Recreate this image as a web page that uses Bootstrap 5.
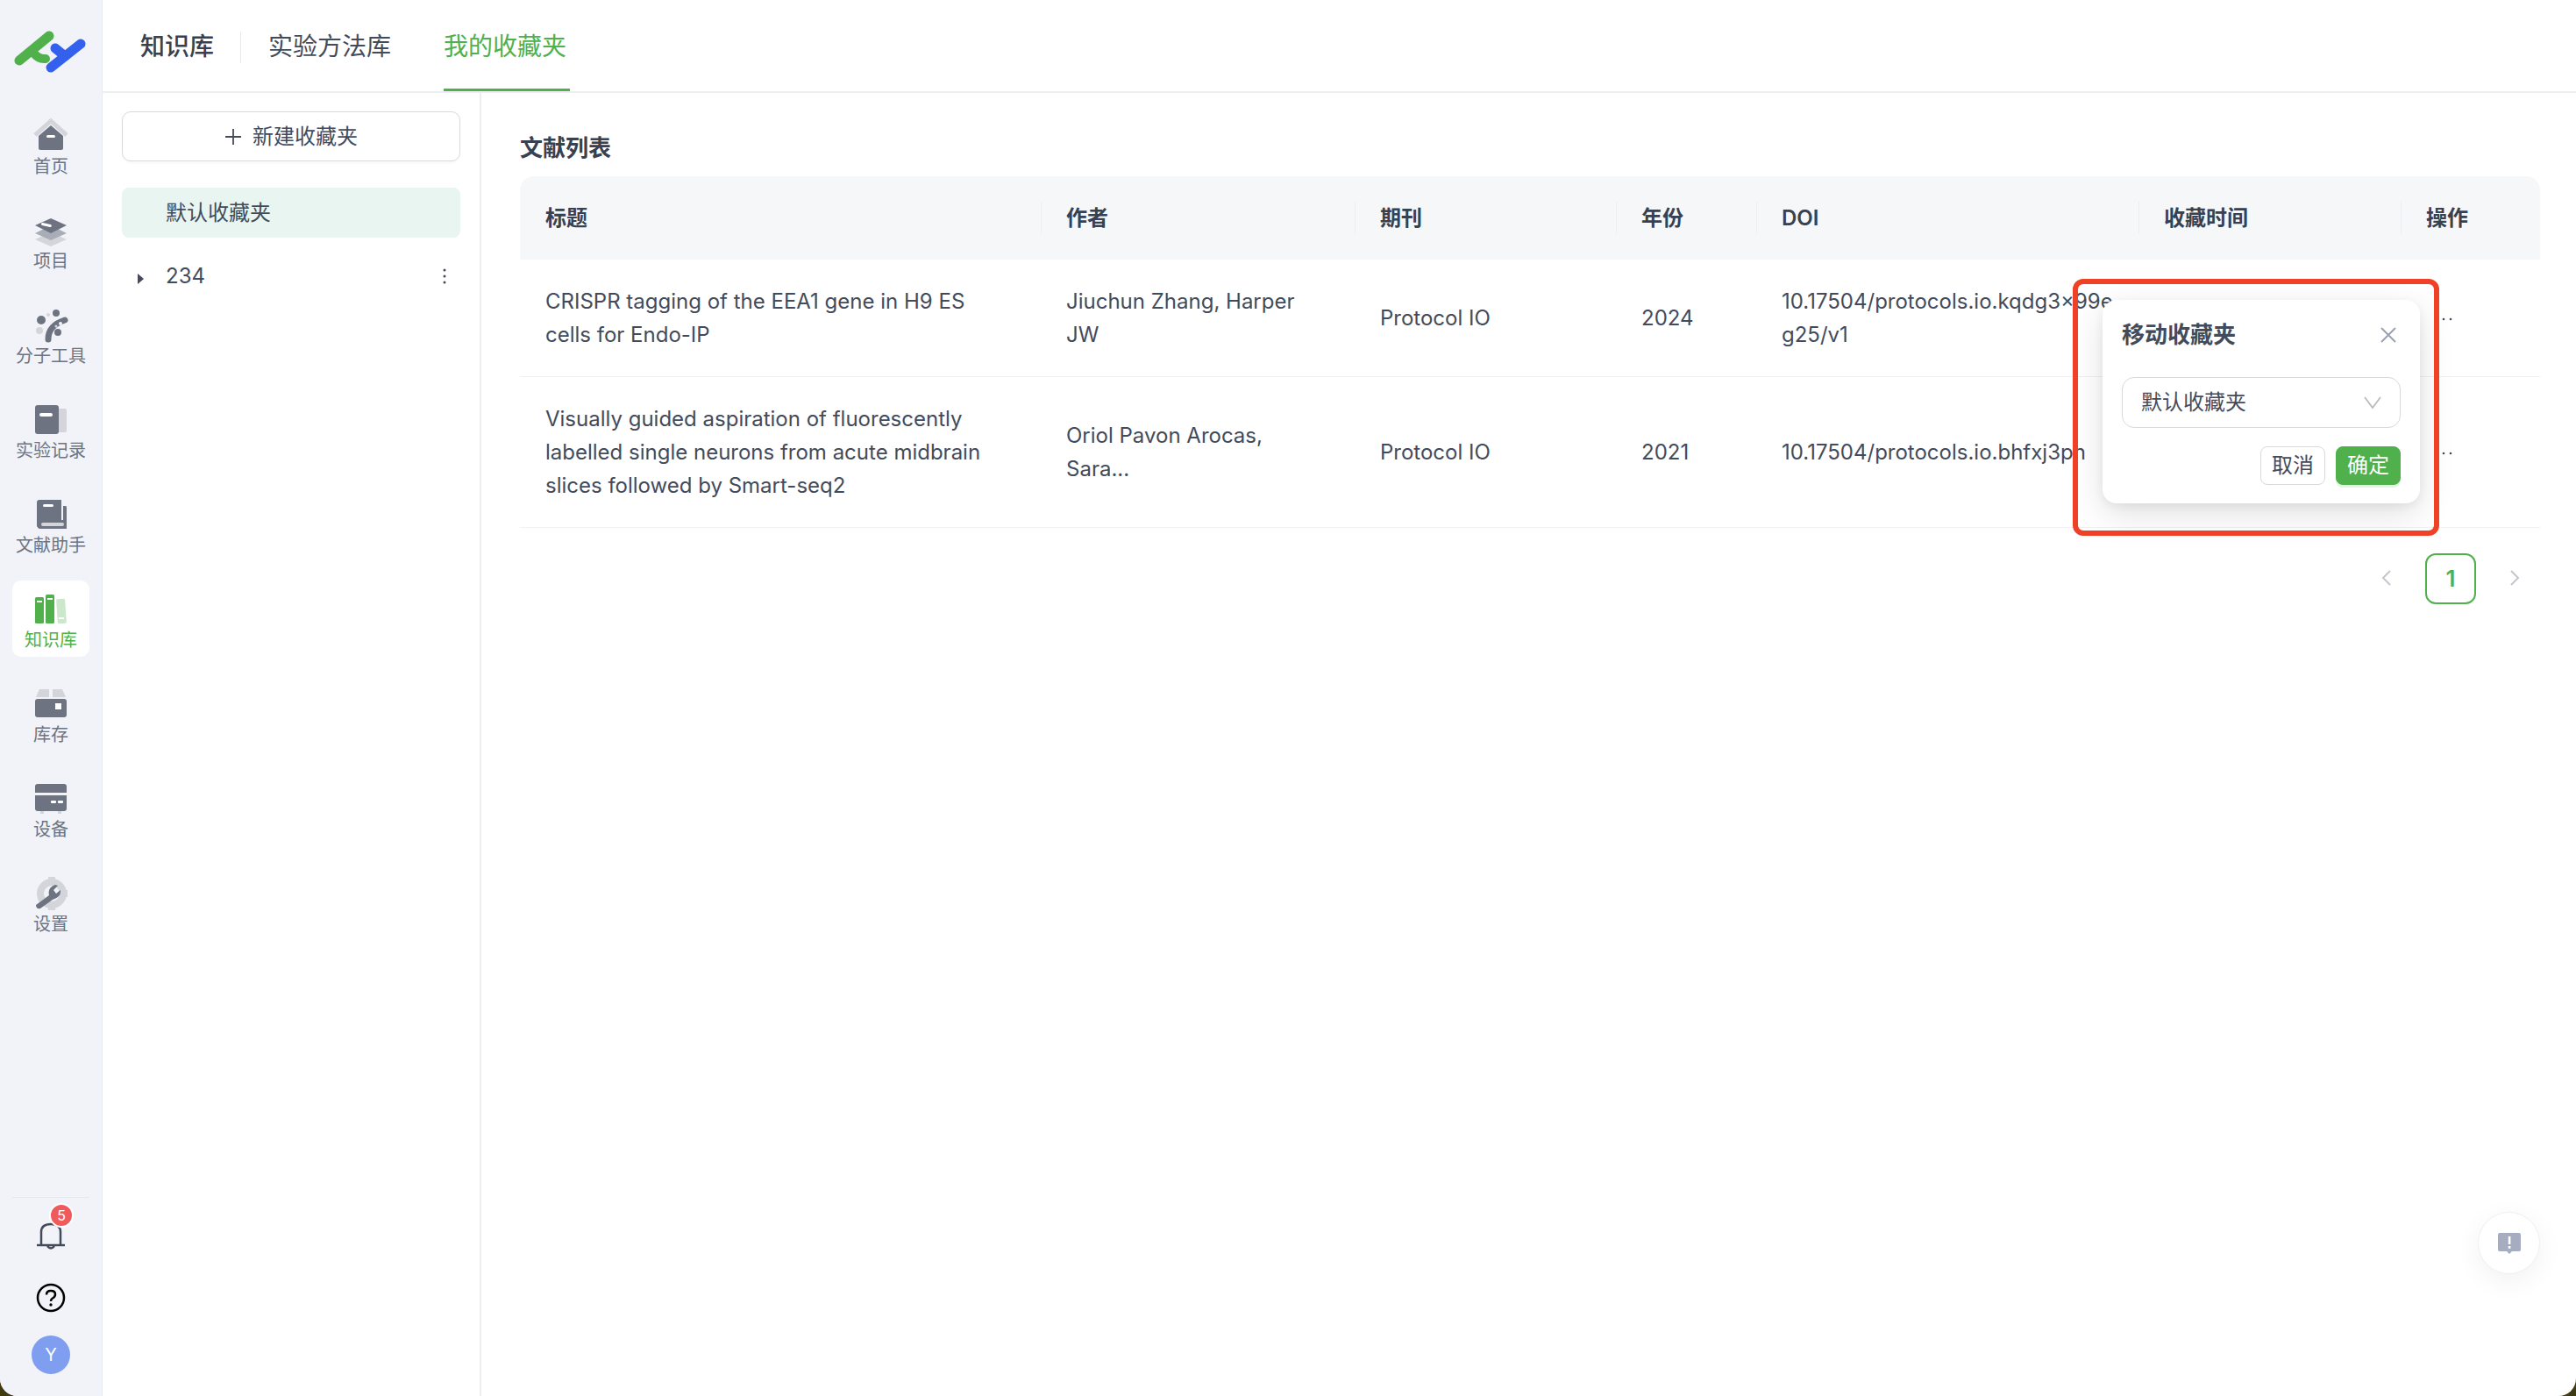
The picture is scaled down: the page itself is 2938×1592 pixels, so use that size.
<!DOCTYPE html>
<html lang="zh-CN">
<head>
    <meta charset="UTF-8">
    <meta name="viewport" content="width=device-width, initial-scale=1.0">
    <title>我的收藏夹</title>
    <link href="https://cdn.jsdelivr.net/npm/bootstrap@5.3.0/dist/css/bootstrap.min.css" rel="stylesheet">
    <style>
        html, body { height: 100%; }
        body {
            background: #3f3a12;
            font-family: Inter, "Noto Sans CJK SC", sans-serif;
            font-size: 24px;
            color: #434b5b;
            overflow: hidden;
        }
        .app-frame {
            height: 1592px;
            background: #fff;
            border-radius: 0 0 20px 20px;
            overflow: hidden;
        }
        .side-rail {
            width: 117px;
            background: #f1f3f8;
            border-right: 1px solid #e9ebf0;
        }
        .logo-box { height: 122px; padding-top: 30px; }
        .rail-nav { gap: 21px; }
        .rail-item {
            width: 88px;
            height: 87px;
            margin: 0 auto;
            border-radius: 10px;
            padding-top: 13px;
            color: #6d7380;
            font-size: 20px;
            line-height: 28px;
            text-decoration: none;
        }
        .rail-item svg { width: 40px; height: 40px; display: block; margin-bottom: 1px; }
        .rail-item.on { background: #fff; color: #50b04c; }
        .rail-line { height: 1px; width: 88px; background: #e6e8ec; margin: 0 auto 22px; }
        .bell-box { width: 40px; height: 40px; margin: 0 auto 33px; }
        .bell-num {
            position: absolute;
            top: -16px;
            right: -6px;
            width: 28px;
            height: 28px;
            border-radius: 50%;
            background: #ef5b5b;
            border: 2px solid #fff;
            color: #fff;
            font-size: 16px;
            line-height: 24px;
            text-align: center;
        }
        .help-box { width: 34px; height: 34px; margin: 0 auto 28px; }
        .user-dot {
            width: 44px;
            height: 44px;
            margin: 0 auto 25px;
            border-radius: 50%;
            background: #7f9ef0;
            color: #fff;
            font-size: 20px;
            line-height: 44px;
            text-align: center;
        }
        .top-tabs { height: 106px; border-bottom: 2px solid #eceef1; padding-left: 43px; }
        .top-tab {
            font-size: 28px;
            line-height: 40px;
            color: #434b5b;
            text-decoration: none;
            padding: 33px 0 31px;
            white-space: nowrap;
        }
        .top-tab.first { font-weight: 500; color: #374151; padding-right: 31px; position: relative; }
        .top-tab.first::after {
            content: "";
            position: absolute;
            right: 0;
            top: 36px;
            height: 36px;
            width: 1px;
            background: #e8eaee;
        }
        .top-tab.second { margin-left: 31px; margin-right: 60px; }
        .top-tab.active-tab {
            color: #50b04c;
            border-bottom: 3px solid #50b04c;
            width: 144px;
            padding-bottom: 30px;
        }
        .folder-panel {
            width: 432px;
            border-right: 2px solid #eceef1;
            padding: 21px 22px 0;
        }
        .new-folder {
            width: 100%;
            height: 57px;
            font-size: 24px;
            line-height: 32px;
            color: #434b5b;
            background: #fff;
            border: 1px solid #d9d9d9;
            border-radius: 10px;
            box-shadow: 0 3px 0 rgba(0, 0, 0, .02);
            margin-bottom: 30px;
        }
        .new-folder:hover { color: #434b5b; background: #fff; border-color: #d9d9d9; }
        .folder-row {
            height: 57px;
            line-height: 57px;
            padding-left: 50px;
            border-radius: 8px;
            position: relative;
        }
        .folder-row.on { background: #e9f5f1; margin-bottom: 15px; }
        .folder-caret {
            position: absolute;
            left: 18px;
            top: 26px;
            width: 0;
            height: 0;
            border-left: 7px solid #434b5b;
            border-top: 6px solid transparent;
            border-bottom: 6px solid transparent;
        }
        .folder-more {
            position: absolute;
            right: 16px;
            top: 20px;
            width: 4px;
            height: 18px;
        }
        .list-area { padding: 45px 41px 0 44px; min-width: 0; }
        .list-title {
            font-size: 26px;
            line-height: 36px;
            font-weight: 600;
            color: #374151;
            margin-bottom: 14px;
        }
        .paper-table { table-layout: fixed; width: 2304px; margin-bottom: 0; color: #434b5b; }
        .paper-table > :not(caption) > * > * { padding: 0 29px; border-color: #eef0f2; color: #434b5b; }
        .paper-table thead th {
            height: 95px;
            background: #f6f7f9;
            border-bottom: 0;
            font-weight: 600;
            font-size: 24px;
            color: #374151;
            position: relative;
            vertical-align: middle;
        }
        .paper-table thead th:first-child { border-top-left-radius: 16px; }
        .paper-table thead th:last-child { border-top-right-radius: 16px; }
        .paper-table thead th + th::before {
            content: "";
            position: absolute;
            left: 0;
            top: 29px;
            height: 37px;
            width: 1px;
            background: #eceef1;
        }
        .paper-table tbody td {
            padding-top: 29px;
            padding-bottom: 28px;
            line-height: 38px;
            vertical-align: middle;
        }
        .doi-cell { word-break: break-all; }
        .w-title { width: 594px; }
        .w-author { width: 358px; }
        .w-journal { width: 298px; }
        .w-year { width: 160px; }
        .w-doi { width: 436px; }
        .w-time { width: 299px; }
        .w-act { width: 159px; }
        .page-bar { gap: 15px; margin-top: 29px; }
        .page-cell {
            width: 58px;
            height: 58px;
            line-height: 54px;
            text-align: center;
            border-radius: 12px;
        }
        .page-cell.on { border: 2px solid #50b04c; color: #50b04c; font-weight: 600; font-size: 26px; }
        .page-cell svg { width: 14px; height: 20px; }
        .move-pop {
            position: absolute;
            left: 2398px;
            top: 342px;
            width: 362px;
            height: 232px;
            padding: 22px 22px 0;
            background: #fff;
            border-radius: 16px;
            box-shadow: 0 12px 40px rgba(0, 0, 0, .12), 0 4px 12px rgba(0, 0, 0, .06);
        }
        .pop-head { height: 36px; margin-bottom: 30px; font-size: 26px; line-height: 36px; font-weight: 600; color: #434b5b; }
        .pop-select {
            height: 58px;
            padding: 0 21px;
            border: 1px solid #d9d9d9;
            border-radius: 14px;
            line-height: 56px;
            margin-bottom: 21px;
        }
        .pop-btn {
            height: 44px;
            width: 74px;
            padding: 0;
            font-size: 24px;
            line-height: 42px;
            border-radius: 8px;
        }
        .pop-cancel { background: #fff; border: 1px solid #d9d9d9; color: #434b5b; }
        .pop-ok { background: #50b04c; border: 1px solid #50b04c; color: #fff; box-shadow: 0 3px 0 rgba(80, 176, 76, .15); }
        .red-mark {
            position: absolute;
            left: 2364px;
            top: 318px;
            width: 418px;
            height: 293px;
            border: 6px solid #ee4126;
            border-radius: 12px;
            pointer-events: none;
        }
        .help-float {
            position: absolute;
            left: 2826px;
            top: 1382px;
            width: 71px;
            height: 71px;
            border-radius: 50%;
            background: #fff;
            border: 1px solid #eef0f5;
            box-shadow: 0 8px 30px rgba(0, 0, 0, .06);
        }
    </style>
</head>
<body>
    <div class="app-frame d-flex position-relative">
        <aside class="side-rail d-flex flex-column flex-shrink-0">
            <div class="logo-box">
                <svg width="110" height="60" viewBox="0 0 110 60">
                    <path d="M22 39 L56 11" stroke="#50b04c" stroke-width="11" stroke-linecap="round" fill="none"/>
                    <path d="M38 30 Q44 38 52 37" stroke="#50b04c" stroke-width="10" stroke-linecap="round" fill="none"/>
                    <path d="M58 47 L92 20" stroke="#3460ee" stroke-width="11" stroke-linecap="round" fill="none"/>
                    <path d="M63 25 L74 34" stroke="#3460ee" stroke-width="11" stroke-linecap="round" fill="none"/>
                </svg>
            </div>
            <nav class="rail-nav d-flex flex-column">
                <a class="rail-item d-flex flex-column align-items-center" href="#">
                    <svg viewBox="0 0 40 40"><path d="M2 19 L20 3 L38 19" fill="none" stroke="#d3d5db" stroke-width="5"/><path d="M6 20 L20 8 L34 20 V34 Q34 36 32 36 H8 Q6 36 6 34Z" fill="#6d7380"/><rect x="15" y="19" width="10" height="3" rx="1.5" fill="#fff"/></svg>
                    <span>首页</span>
                </a>
                <a class="rail-item d-flex flex-column align-items-center" href="#">
                    <svg viewBox="0 0 40 40"><path d="M20 22 L38 30 L20 38 L2 30Z" fill="#d3d5db"/><path d="M20 14 L38 23 L20 31 L2 23Z" fill="#a9adb7"/><path d="M20 6 L38 14 L20 23 L2 14Z" fill="#6d7380"/><rect x="9" y="12" width="12" height="3" rx="1.5" fill="#fff" transform="rotate(12 15 13)"/></svg>
                    <span>项目</span>
                </a>
                <a class="rail-item d-flex flex-column align-items-center" href="#">
                    <svg viewBox="0 0 40 40"><path d="M17 36 Q17 20 36 14" fill="none" stroke="#6d7380" stroke-width="7" stroke-linecap="round"/><circle cx="26" cy="6" r="4" fill="#6d7380"/><circle cx="9" cy="14" r="5" fill="#6d7380"/><circle cx="7" cy="26" r="4" fill="#d3d5db"/><circle cx="17" cy="8" r="2" fill="#d3d5db"/><circle cx="28" cy="28" r="4" fill="#6d7380"/><circle cx="26" cy="21" r="1.5" fill="#d3d5db"/><circle cx="31" cy="18" r="2" fill="#f1f3f8"/></svg>
                    <span>分子工具</span>
                </a>
                <a class="rail-item d-flex flex-column align-items-center" href="#">
                    <svg viewBox="0 0 40 40"><rect x="26" y="7" width="12" height="27" rx="2" fill="#d3d5db"/><rect x="2" y="3" width="27" height="33" rx="3" fill="#6d7380"/><rect x="7" y="12" width="15" height="4" rx="2" fill="#fff"/></svg>
                    <span>实验记录</span>
                </a>
                <a class="rail-item d-flex flex-column align-items-center" href="#">
                    <svg viewBox="0 0 40 40"><path d="M7 3 H32 V26 H13 Q8 26 8 30 Q8 34 13 34 H37 V24 L38 26 V36 H9 Q4 36 4 31 V6 Q4 3 7 3Z" fill="#6d7380"/><path d="M34 10 H37 Q38 10 38 12 V36 H9 Q4 36 4 31 Q4 26 9 26 H34Z" fill="#6d7380"/><rect x="9" y="29" width="26" height="4" rx="2" fill="#d3d5db"/><rect x="11" y="8" width="12" height="3" rx="1.5" fill="#fff"/></svg>
                    <span>文献助手</span>
                </a>
                <a class="rail-item on d-flex flex-column align-items-center" href="#">
                    <svg viewBox="0 0 40 40"><rect x="2" y="6" width="10" height="30" rx="1.5" fill="#50b04c"/><rect x="14" y="3" width="10" height="33" rx="1.5" fill="#50b04c"/><rect x="27" y="8" width="10" height="28" rx="1.5" fill="#cbe8ca" transform="rotate(-4 32 22)"/><rect x="4" y="10" width="6" height="2" fill="#fff"/><rect x="16" y="7" width="6" height="2" fill="#fff"/><rect x="29" y="29" width="6" height="2" fill="#fff"/></svg>
                    <span>知识库</span>
                </a>
                <a class="rail-item d-flex flex-column align-items-center" href="#">
                    <svg viewBox="0 0 40 40"><path d="M7 3 H18 V12 H3Z" fill="#d3d5db"/><path d="M22 3 H33 L37 12 H22Z" fill="#d3d5db"/><rect x="2" y="14" width="36" height="21" rx="3" fill="#6d7380"/><rect x="25" y="19" width="7" height="7" fill="#fff"/></svg>
                    <span>库存</span>
                </a>
                <a class="rail-item d-flex flex-column align-items-center" href="#">
                    <svg viewBox="0 0 40 40"><path d="M5 3 H35 Q38 3 38 6 V13 H2 V6 Q2 3 5 3Z" fill="#6d7380"/><path d="M2 16 H38 V31 Q38 34 35 34 H5 Q2 34 2 31Z" fill="#6d7380"/><rect x="8" y="34" width="4" height="3" fill="#d3d5db"/><rect x="28" y="34" width="4" height="3" fill="#d3d5db"/><rect x="20" y="22" width="6" height="3" rx="1" fill="#fff"/><rect x="28" y="22" width="6" height="3" rx="1" fill="#fff"/></svg>
                    <span>设备</span>
                </a>
                <a class="rail-item d-flex flex-column align-items-center" href="#">
                    <svg viewBox="0 0 40 40"><circle cx="21" cy="20" r="13" fill="none" stroke="#d3d5db" stroke-width="8"/><g fill="#d3d5db"><rect x="17" y="1" width="8" height="6"/><rect x="17" y="33" width="8" height="6"/><rect x="33" y="16" width="6" height="8"/></g><path d="M3 33 L18 22 Q16 13 25 10 L28 11 L23 16 L26 20 L31 16 Q32 24 22 27 L8 37 Q3 38 3 33Z" fill="#6d7380"/></svg>
                    <span>设置</span>
                </a>
            </nav>
            <div class="mt-auto">
                <div class="rail-line"></div>
                <div class="bell-box position-relative">
                    <svg width="40" height="40" viewBox="0 0 40 40"><path d="M9 32 V17 Q9 8 20 8 Q31 8 31 17 V32 M4 32 H36" fill="none" stroke="#434b5b" stroke-width="2.5"/><path d="M16 33 Q20 38 24 33" fill="none" stroke="#434b5b" stroke-width="2.5"/></svg>
                    <span class="bell-num">5</span>
                </div>
                <div class="help-box">
                    <svg width="34" height="34" viewBox="0 0 34 34"><circle cx="17" cy="17" r="15" fill="none" stroke="#000" stroke-width="2.5"/><path d="M12 13.5 Q12 9 17 9 Q22 9 22 13 Q22 16 19 17.5 Q17 18.500 17 21" fill="none" stroke="#000" stroke-width="2.5"/><circle cx="17" cy="25" r="1.700"/></svg>
                </div>
                <div class="user-dot">Y</div>
            </div>
        </aside>

        <div class="flex-grow-1 d-flex flex-column" style="min-width:0">
            <div class="top-tabs d-flex flex-shrink-0">
                <a class="top-tab first" href="#">知识库</a>
                <a class="top-tab second" href="#">实验方法库</a>
                <a class="top-tab active-tab" href="#">我的收藏夹</a>
            </div>
            <div class="d-flex flex-grow-1">
                <div class="folder-panel flex-shrink-0">
                    <button type="button" class="btn new-folder d-flex align-items-center justify-content-center gap-2">
                        <svg width="20" height="20" viewBox="0 0 20 20"><path d="M10 1 V19 M1 10 H19" stroke="#434b5b" stroke-width="1.800"/></svg>
                        <span class="ms-1">新建收藏夹</span>
                    </button>
                    <div class="folder-row on">默认收藏夹</div>
                    <div class="folder-row">
                        <span class="folder-caret"></span>234
                        <svg class="folder-more" viewBox="0 0 4 18"><circle cx="2" cy="2" r="1.500" fill="#434b5b"/><circle cx="2" cy="9" r="1.500" fill="#434b5b"/><circle cx="2" cy="16" r="1.500" fill="#434b5b"/></svg>
                    </div>
                </div>
                <div class="list-area flex-grow-1">
                    <div class="list-title">文献列表</div>
                    <table class="table paper-table">
                        <colgroup>
                            <col class="w-title"><col class="w-author"><col class="w-journal"><col class="w-year"><col class="w-doi"><col class="w-time"><col class="w-act">
                        </colgroup>
                        <thead>
                            <tr><th>标题</th><th>作者</th><th>期刊</th><th>年份</th><th>DOI</th><th>收藏时间</th><th>操作</th></tr>
                        </thead>
                        <tbody>
                            <tr>
                                <td>CRISPR tagging of the EEA1 gene in H9 ES cells for Endo-IP</td>
                                <td>Jiuchun Zhang, Harper JW</td>
                                <td>Protocol IO</td>
                                <td>2024</td>
                                <td class="doi-cell">10.17504/protocols.io.kqdg3x99eg25/v1</td>
                                <td></td>
                                <td><svg width="32" height="6" viewBox="0 0 32 6"><circle cx="12" cy="3" r="1.300" fill="#434b5b"/><circle cx="20" cy="3" r="1.300" fill="#434b5b"/><circle cx="28" cy="3" r="1.300" fill="#434b5b"/></svg></td>
                            </tr>
                            <tr>
                                <td>Visually guided aspiration of fluorescently labelled single neurons from acute midbrain slices followed by Smart-seq2</td>
                                <td>Oriol Pavon Arocas, Sara...</td>
                                <td>Protocol IO</td>
                                <td>2021</td>
                                <td class="doi-cell">10.17504/protocols.io.bhfxj3pn</td>
                                <td></td>
                                <td><svg width="32" height="6" viewBox="0 0 32 6"><circle cx="12" cy="3" r="1.300" fill="#434b5b"/><circle cx="20" cy="3" r="1.300" fill="#434b5b"/><circle cx="28" cy="3" r="1.300" fill="#434b5b"/></svg></td>
                            </tr>
                        </tbody>
                    </table>
                    <div class="page-bar d-flex justify-content-end">
                        <div class="page-cell"><svg viewBox="0 0 14 20"><path d="M11 2 L3 10 L11 18" fill="none" stroke="#c4c6cc" stroke-width="2"/></svg></div>
                        <div class="page-cell on">1</div>
                        <div class="page-cell"><svg viewBox="0 0 14 20"><path d="M3 2 L11 10 L3 18" fill="none" stroke="#c4c6cc" stroke-width="2"/></svg></div>
                    </div>
                </div>
            </div>
        </div>

        <div class="move-pop">
            <div class="pop-head d-flex justify-content-between align-items-center">
                <span>移动收藏夹</span>
                <svg class="me-1" width="20" height="20" viewBox="0 0 20 20"><path d="M2 2 L18 18 M18 2 L2 18" stroke="#9aa1b1" stroke-width="2"/></svg>
            </div>
            <div class="pop-select d-flex justify-content-between align-items-center">
                <span>默认收藏夹</span>
                <svg width="20" height="14" viewBox="0 0 20 14"><path d="M1 1 L10 13 L19 1" fill="none" stroke="#b9bbc1" stroke-width="1.800"/></svg>
            </div>
            <div class="d-flex justify-content-end gap-2">
                <button type="button" class="btn pop-btn pop-cancel me-1">取消</button>
                <button type="button" class="btn pop-btn pop-ok">确定</button>
            </div>
        </div>
        <div class="red-mark"></div>

        <div class="help-float d-flex align-items-center justify-content-center">
            <svg width="28" height="26" viewBox="0 0 28 26"><path d="M3 1 H25 Q27 1 27 3 V20 Q27 22 25 22 H17 L14 25 L11 22 H3 Q1 22 1 20 V3 Q1 1 3 1Z" fill="#a6adc1"/><rect x="12.800" y="5" width="2.600" height="9" fill="#fff"/><rect x="12.800" y="16" width="2.600" height="2.800" fill="#fff"/></svg>
        </div>
    </div>

    <script src="https://cdn.jsdelivr.net/npm/bootstrap@5.3.0/dist/js/bootstrap.bundle.min.js"></script>
</body>
</html>
